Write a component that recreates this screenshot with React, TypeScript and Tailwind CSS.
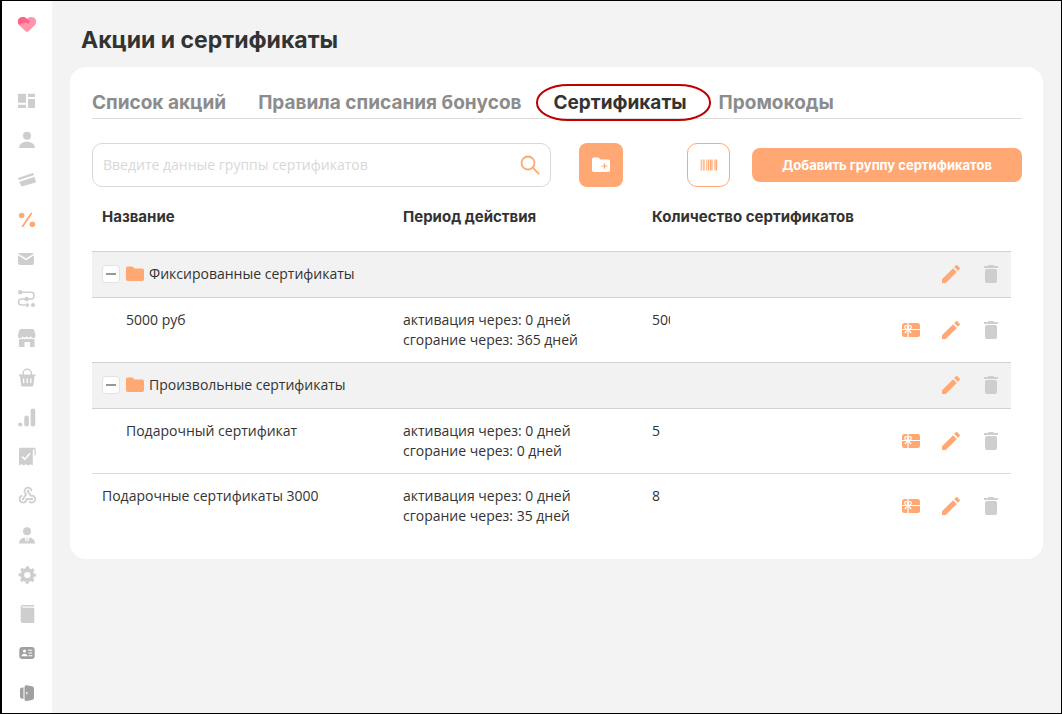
import type { ReactNode } from "react";
import { MdEdit, MdWebhook } from "react-icons/md";

function Icon({ children }: { children: ReactNode }) {
  return (
    <svg width="20" height="20" viewBox="0 0 20 20" fill="currentColor" aria-hidden="true">
      {children}
    </svg>
  );
}

const menu = [
  {
    label: "Главная",
    color: "text-[#cecece]",
    icon: (
      <Icon>
        <path d="M1 2.7h8v9H1zM1 13.7h8V17H1zM11 2.7h7V6h-7zM11 8h7v9h-7z" />
      </Icon>
    ),
  },
  {
    label: "Клиенты",
    color: "text-[#cecece]",
    icon: (
      <Icon>
        <circle cx="10" cy="5.7" r="4" />
        <path d="M2 18c0-4 3.500-6.300 8-6.300s8 2.300 8 6.300z" />
      </Icon>
    ),
  },
  {
    label: "Карты",
    color: "text-[#cecece]",
    icon: (
      <Icon>
        <path
          d="M1.500 8.300L16 3.500l.5 1.300L2 9.500zM2.700 12.200L17.300 7.500l1.200 4.500L4.700 16z"
          stroke="currentColor"
          strokeLinejoin="round"
        />
      </Icon>
    ),
  },
  {
    label: "Акции и сертификаты",
    color: "text-[#ffa873]",
    icon: (
      <Icon>
        <circle cx="4.700" cy="6.500" r="2.800" />
        <circle cx="15.300" cy="15.300" r="2.800" />
        <path d="M5.700 17.300L14.300 4.500" stroke="currentColor" strokeWidth="1.800" strokeLinecap="round" />
      </Icon>
    ),
  },
  {
    label: "Рассылки",
    color: "text-[#cecece]",
    icon: (
      <Icon>
        <path d="M2.500 4h13q.8 0 1.300.7L9 9.600 1.200 4.700Q1.700 4 2.500 4zM1 6.300l8 5 8-5V14q0 2-2 2H3q-2 0-2-2z" />
      </Icon>
    ),
  },
  {
    label: "Цепочки",
    color: "text-[#cecece]",
    icon: (
      <Icon>
        <circle cx="3.200" cy="4.300" r="2.200" />
        <circle cx="9.700" cy="11" r="2.200" />
        <circle cx="16" cy="17" r="2.100" />
        <path
          d="M3 4.300h11.500a2.500 3.350 0 0 1 0 6.700H4.500a3 3 0 0 0 0 6H11"
          fill="none"
          stroke="currentColor"
          strokeWidth="1.500"
        />
        <path d="M9.500 14l3 3-3 3z" />
      </Icon>
    ),
  },
  {
    label: "Магазины",
    color: "text-[#cecece]",
    icon: (
      <Icon>
        <path d="M4 1h11.500q1.300 0 1.700 1.200L18.500 7a2.200 2.700 0 0 1-4.400 1 2.200 2 0 0 1-4.300 0 2.200 2 0 0 1-4.300 0A2.200 2.700 0 0 1 1 7l1.300-4.800Q2.700 1 4 1zM2 11q2 .8 3.500-.5 2 1.500 4.300 0 2.200 1.500 4.200 0 1.500 1.300 3.500.5v8h-4.500v-5h-5.500v5H2z" />
      </Icon>
    ),
  },
  {
    label: "Товары",
    color: "text-[#cecece]",
    icon: (
      <Icon>
        <path d="M6 8V6.500a4.200 4.200 0 0 1 8.400 0V8" fill="none" stroke="currentColor" strokeWidth="1.500" />
        <path
          fillRule="evenodd"
          d="M2 7.500h16.500v1.800h-1l-1 8.700q-.2 1.500-1.500 1.500H5.500Q4.200 19.500 4 18L3 9.300H2zM6 11.500V16h1.300v-4.500zM9.600 11.500V16h1.300v-4.500zM13.200 11.500V16h1.300v-4.500z"
        />
      </Icon>
    ),
  },
  {
    label: "Аналитика",
    color: "text-[#cecece]",
    icon: (
      <Icon>
        <circle cx="3.200" cy="17.500" r="2.100" />
        <rect x="7.300" y="8.500" width="4.600" height="11" rx="2.200" />
        <rect x="13.600" y="1.500" width="4.600" height="18" rx="2.200" />
      </Icon>
    ),
  },
  {
    label: "Отчёты",
    color: "text-[#cecece]",
    icon: (
      <Icon>
        <path d="M3.500 1.800H17q1.700 0 1.700 2v5.700h-1.200v-6h-1.700v16l-2.300-1.300-2.200 1.300L9 18.200l-2.300 1.300-2.300-1.300L2 19.500V3.800q0-2 1.500-2z" />
        <path d="M5 10.500l2.800 2.800L13 7.500" fill="none" stroke="#fff" strokeWidth="1.600" />
      </Icon>
    ),
  },
  { label: "Вебхуки", color: "text-[#cecece]", icon: <MdWebhook size={21} aria-hidden="true" /> },
  {
    label: "Сотрудники",
    color: "text-[#cecece]",
    icon: (
      <Icon>
        <circle cx="10" cy="6.300" r="4" />
        <path d="M2 18.500c0-3.500 2-5.500 5.500-6l1.700 5 .5-3.600-.7-1.400h2l-.7 1.400.5 3.600 1.700-5c3.500.5 5.500 2.500 5.500 6z" />
      </Icon>
    ),
  },
  {
    label: "Настройки",
    color: "text-[#cecece]",
    icon: (
      <Icon>
        <circle cx="10.300" cy="11" r="5" fill="none" stroke="currentColor" strokeWidth="3.800" />
        <circle
          cx="10.300"
          cy="11"
          r="7.300"
          fill="none"
          stroke="currentColor"
          strokeWidth="2.800"
          strokeDasharray="3 2.733"
          strokeDashoffset="1.500"
        />
      </Icon>
    ),
  },
  {
    label: "Справочник",
    color: "text-[#cecece]",
    icon: (
      <Icon>
        <path d="M5.500 1h11.800v1h-11q-1.200 0-1.200.8t1.200.9h11V19H5.700q-2 0-2-2V3q0-2 1.800-2z" />
        <path d="M6.300 2.500h11v.6h-11z" />
      </Icon>
    ),
  },
  {
    label: "Профиль",
    color: "text-[#a0a0a0]",
    icon: (
      <Icon>
        <rect x="2.300" y="4" width="15.400" height="12" rx="3" />
        <g fill="#fff">
          <circle cx="7.500" cy="8" r="1.600" />
          <path d="M4.500 13.300q0-2.600 3-2.600t3 2.600zM11 6.800h4.300v1H11zM11.500 9.500h3.800v1h-3.800zM11.500 12.200h3.800v1h-3.800z" />
        </g>
      </Icon>
    ),
  },
  {
    label: "Выход",
    color: "text-[#a0a0a0]",
    icon: (
      <Icon>
        <path d="M6.500 4.500v11.300H5.300q-2.300 0-2.300-2.300V6.800q0-2.300 2.300-2.300z" />
        <path
          fillRule="evenodd"
          d="M9.500 2.300L15 3.300q2 .4 2 2.400v9q0 2-2 2.400l-5.500.9q-2 .2-2-1.800v-12q0-2 2-1.900zM9.200 9v2.200h1.200V9z"
        />
      </Icon>
    ),
  },
];

const tabs = ["Список акций", "Правила списания бонусов", "Сертификаты", "Промокоды"];

const folders = [
  {
    name: "Фиксированные сертификаты",
    items: [{ name: "5000 руб", activation: "0 дней", expiry: "365 дней", count: "500" }],
  },
  {
    name: "Произвольные сертификаты",
    items: [{ name: "Подарочный сертификат", activation: "0 дней", expiry: "0 дней", count: "5" }],
  },
];

const loose = [{ name: "Подарочные сертификаты 3000", activation: "0 дней", expiry: "35 дней", count: "8" }];

type Certificate = (typeof loose)[number];

function HeartLogo() {
  return (
    <svg width="20" height="20" viewBox="0 0 20 20" aria-hidden="true">
      <path
        d="M8.500 17.200L2.500 11.500C0 9 .6 5 3 3.700c2.400-1.300 5-.8 7 1.200 2-2 4.600-2.500 7-1.200 2.400 1.300 3 5.300.5 7.800l-6 5.700q-1.500 1.100-3 0z"
        fill="#ff94aa"
      />
      <path
        d="M2.500 11C0 8.500.6 5 3 3.700c2.400-1.300 5-.8 7 1.200l2.300 2.300q.6 2-1.300 2.800L8.500 7.900q-1 1.800-3 1.300-1.500.3-3 1.800z"
        fill="#ff6384"
      />
    </svg>
  );
}

function FolderIcon({ plus = false }: { plus?: boolean }) {
  return (
    <svg width="18" height="16" viewBox="0 0 18 16" fill="currentColor" aria-hidden="true">
      <path d="M1.800.5h4.700l2 2h7.700q1.800 0 1.800 1.800v9q0 1.800-1.800 1.800H1.800Q0 15.100 0 13.300v-11Q0 .5 1.800.5z" />
      {plus && <path d="M12.500 6.200v5.600M9.700 9h5.600" stroke="#ffa873" strokeWidth="1.200" />}
    </svg>
  );
}

function GiftCardIcon() {
  return (
    <svg width="20" height="20" viewBox="0 0 20 20" aria-hidden="true">
      <rect x="1" y="3" width="18" height="14" rx="2.500" fill="#ffa873" />
      <g fill="none" stroke="#fff" strokeWidth="1.200">
        <path d="M7 3v14M1 9.500h18" />
        <path d="M7 9.500C3 9.700 3.200 5.500 5 5.500s2 2 2 4c0-2 .2-4 2-4s2 4.200-2 4l-3.200 3.500M7 9.500l3.200 3.500" />
      </g>
    </svg>
  );
}

function TrashIcon() {
  return (
    <svg width="20" height="20" viewBox="0 0 20 20" fill="#cecece" aria-hidden="true">
      <path d="M3 2h3.700l1-1h4.600l1 1H17v2H3z" />
      <rect x="4" y="5" width="12" height="14" rx="2" />
    </svg>
  );
}

function RowActions({ gift = false }: { gift?: boolean }) {
  return (
    <div className="flex items-center justify-end gap-5">
      {gift && (
        <button type="button" aria-label="Выдать сертификат">
          <GiftCardIcon />
        </button>
      )}
      <button type="button" aria-label="Редактировать" className="flex w-5 justify-center text-[#ffa873]">
        <MdEdit size={24} className="shrink-0" />
      </button>
      <button type="button" aria-label="Удалить">
        <TrashIcon />
      </button>
    </div>
  );
}

function CertificateRow({ item, nested = false }: { item: Certificate; nested?: boolean }) {
  return (
    <tr className="border-b border-[#dcdcdc] last:border-b-0">
      <td className={nested ? "py-3 pr-2 pl-[34px] align-top" : "px-[10px] py-3 align-top"}>{item.name}</td>
      <td className="px-[10px] py-3 align-top">
        <div>активация через: {item.activation}</div>
        <div>сгорание через: {item.expiry}</div>
      </td>
      <td className="px-[10px] py-3 align-top">
        <div className="w-[18px] overflow-hidden">{item.count}</div>
      </td>
      <td className="px-[10px]">
        <RowActions gift />
      </td>
    </tr>
  );
}

function FolderRow({ name }: { name: string }) {
  return (
    <tr className="h-[46px] border-y border-[#d2d2d2] bg-[#f2f2f2]">
      <td colSpan={3} className="px-[10px]">
        <div className="flex items-center">
          <button
            type="button"
            aria-label="Свернуть"
            className="flex size-[18px] items-center justify-center rounded-sm border border-[#e2e2e2] bg-white"
          >
            <span className="h-[2px] w-[10px] bg-[#999]" />
          </button>
          <span className="mr-[5px] ml-[6px] text-[#ffa873]">
            <FolderIcon />
          </span>
          {name}
        </div>
      </td>
      <td className="px-[10px]">
        <RowActions />
      </td>
    </tr>
  );
}

export default function App() {
  return (
    <div className="flex min-h-screen border border-l-2 border-black bg-[#f3f3f3] font-['Open_Sans','Noto_Sans',sans-serif] text-sm leading-5 text-[#333]">
      <aside className="flex w-[50px] shrink-0 flex-col items-center bg-white">
        <a href="#" aria-label="На главную" className="mb-12 pt-[13px]">
          <HeartLogo />
        </a>
        <nav className="flex flex-1 flex-col justify-between pb-px">
          {menu.map((item) => (
            <a
              key={item.label}
              href="#"
              aria-label={item.label}
              className={`flex h-[38px] w-[50px] items-center justify-center ${item.color}`}
            >
              {item.icon}
            </a>
          ))}
        </nav>
      </aside>

      <main className="min-w-0 flex-1 px-[18px]">
        <h1 className="px-[11px] pt-[25px] pb-[13px] font-['Inter',sans-serif] text-[23px] leading-7 font-bold">
          Акции и сертификаты
        </h1>

        <section className="rounded-2xl bg-white pt-5 pr-[21px] pb-[21px] pl-[22px]">
          <div
            role="tablist"
            className="flex gap-8 border-b border-[#dcdcdc] font-['Inter',sans-serif] text-[19px] leading-7 font-bold text-[#8c8c8c]"
          >
            {tabs.map((tab) => {
              const active = tab === "Сертификаты";
              return (
                <button
                  key={tab}
                  type="button"
                  role="tab"
                  aria-selected={active}
                  className={active ? "relative h-[31px] whitespace-nowrap text-[#333]" : "h-[31px] whitespace-nowrap"}
                >
                  {tab}
                  {active && (
                    <span className="absolute -top-[3px] -right-6 -bottom-[3px] -left-[18px] rounded-[32px/18px] border-2 border-[#c00000]" />
                  )}
                </button>
              );
            })}
          </div>

          <div className="flex items-center pt-6">
            <label className="flex h-11 flex-1 items-center rounded-[10px] border border-[#d8d8d8] pr-[10px] pl-[10px] text-[#ffa873]">
              <input
                type="text"
                aria-label="Поиск группы сертификатов"
                placeholder="Введите данные группы сертификатов"
                className="min-w-0 flex-1 text-[#333] outline-none placeholder:text-[#d8d8d8]"
              />
              <svg width="20" height="20" viewBox="0 0 20 20" fill="none" stroke="currentColor" strokeWidth="1.800" aria-hidden="true">
                <circle cx="8" cy="8" r="6.500" />
                <path d="M12.700 12.700l6 6" strokeLinecap="round" />
              </svg>
            </label>
            <button
              type="button"
              aria-label="Создать папку"
              className="ml-7 flex size-11 items-center justify-center rounded-lg bg-[#ffa873] text-white"
            >
              <FolderIcon plus />
            </button>
            <button
              type="button"
              aria-label="Штрихкод"
              className="ml-16 flex h-11 w-[43px] items-center justify-center rounded-[10px] border border-[#ffa873]"
            >
              <svg width="18" height="12" viewBox="0 0 18 12" fill="#ffa873" aria-hidden="true">
                <path d="M.7.500h1v11h-1zM2.700.500h1v11h-1zM4.400.500H5v11h-.6zM6 .500h.700v11H6zM7.700.500h1.300v11H7.700zM9.700.500h2v11h-2zM12.400.500h.600v11h-.600zM14 .500h.600v11H14zM15.400.500h1.800v11h-1.800z" />
              </svg>
            </button>
            <button
              type="button"
              className="ml-[22px] h-[34px] w-[270px] rounded-lg bg-[#ffa873] font-['Inter',sans-serif] text-[13px] font-bold text-white"
            >
              Добавить группу сертификатов
            </button>
          </div>

          <div className="pr-[11px]">
            <table className="w-full table-fixed border-collapse text-left">
              <thead>
                <tr className="h-16 font-['Inter',sans-serif] text-[15px]">
                  <th className="w-[301px] px-[10px] pt-5 align-top font-bold">Название</th>
                  <th className="w-[249px] px-[10px] pt-5 align-top font-bold">Период действия</th>
                  <th className="px-[10px] pt-5 align-top font-bold">Количество сертификатов</th>
                  <th className="w-[140px]" aria-label="Действия" />
                </tr>
              </thead>
              {folders.map((folder) => (
                <tbody key={folder.name}>
                  <FolderRow name={folder.name} />
                  {folder.items.map((item) => (
                    <CertificateRow key={item.name} item={item} nested />
                  ))}
                </tbody>
              ))}
              <tbody className="border-t border-[#dcdcdc]">
                {loose.map((item) => (
                  <CertificateRow key={item.name} item={item} />
                ))}
              </tbody>
            </table>
          </div>
        </section>
      </main>
    </div>
  );
}
